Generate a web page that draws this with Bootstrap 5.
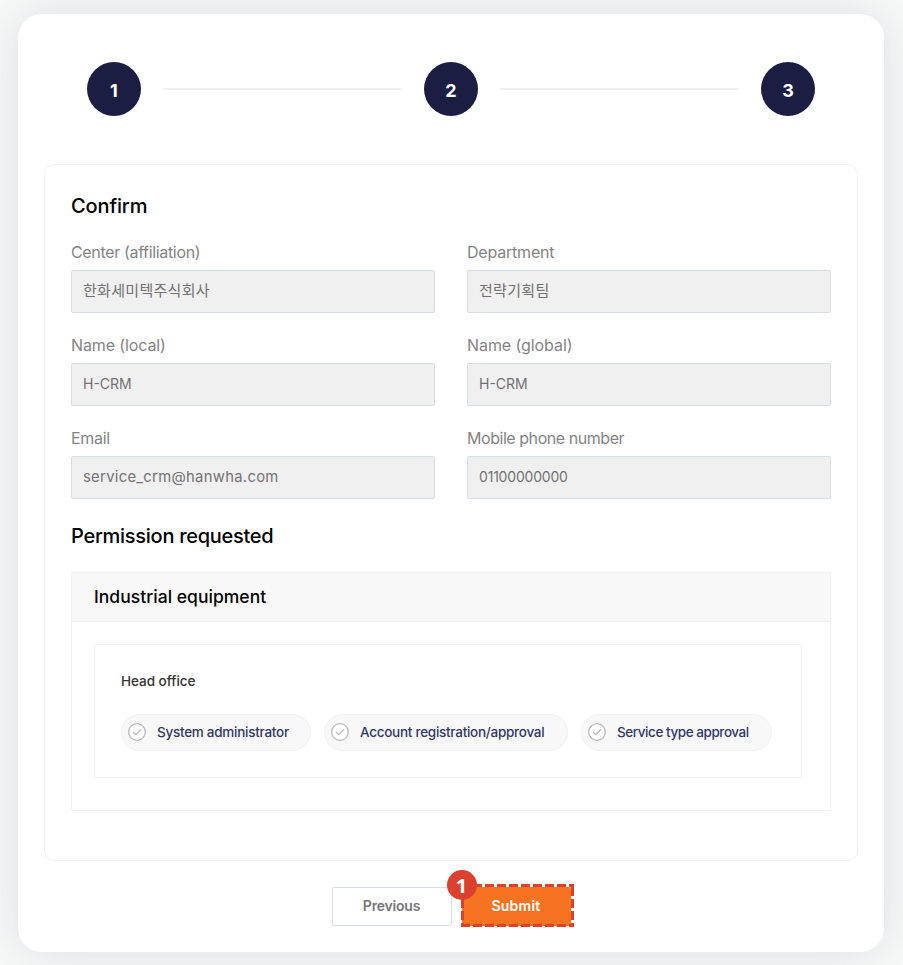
<!DOCTYPE html>
<html lang="en">
<head>
<meta charset="utf-8">
<meta name="viewport" content="width=device-width, initial-scale=1">
<title>Confirm</title>
<link href="https://cdn.jsdelivr.net/npm/bootstrap@5.3.0/dist/css/bootstrap.min.css" rel="stylesheet">
<style>
body{font-family:Inter,"Noto Sans CJK KR",sans-serif;background:#f8f9f8;color:#000;height:965px;overflow:hidden}
.sheet{margin:14px 19px 0 18px;height:938px;border-radius:24px;padding:48px 26px 0;background:#fff;box-shadow:0 0 54px rgba(60,72,115,.15)}
.stepper{padding:0 43px;margin-bottom:48px}
.step-dot{width:54px;height:54px;flex:none;background:#1b1d43;color:#fff;font-size:18px;font-weight:700;padding-top:2px}
.step-line{height:2px;background:#f1f1f2;margin:0 22px}
.panel{height:697px;border:1px solid #f1f1f2;border-radius:10px;padding:26px 26px 0}
.heading{font-size:20px;font-weight:500;line-height:30px;margin:0;white-space:nowrap}
.fields{--bs-gutter-x:32px;margin-top:19px}
.fields>div{height:93.2px}
.form-label{font-size:16px;line-height:24px;color:#848484;margin:0 0 6px;display:block}
.form-control[readonly]{height:43px;padding:0 11px 2px;font-size:14px;line-height:39px;color:#727272;background:#f0f0f0;border:1px solid #d9dee4;border-radius:2px}
.heading.k-perm{padding-top:1px}
.group-box{margin-top:21px;height:239px;border:1px solid #f1f1f2}
.group-title{height:49px;padding:0 22px;font-size:17.5px;font-weight:500;background:#f8f8f8;border-bottom:1px solid #f1f1f2;line-height:47px}
.office{margin:22px 28px 0 22px;height:134px;border:1px solid #f1f1f2;border-radius:2px;padding:25px 26px 0}
.office-name{font-size:13.5px;font-weight:500;line-height:22px;color:#333;margin-bottom:22px;letter-spacing:-.02px}
.pills{gap:13px}
.pill{height:37px;border:1px solid #f1f1f2;background:#f8f8f8;color:#323968;font-size:13.5px;font-weight:500;gap:11px;padding-left:6px;white-space:nowrap}
.pill svg{flex:none}
.actions{margin-top:26px;gap:10px}
.actions .btn{height:39px;padding:0 0 2px;font-size:14px;font-weight:600;border-radius:2px}
.btn-prev{width:120px;background:#fff;border:1px solid #d9dee4;color:#777}
.actions .btn-send{width:109px;background:#f57321;border:0;color:#fff}
.frame{left:-1px;top:-3px;width:113px;height:43px}
.callout-no{left:-15px;top:-17px;width:30px;height:30px;background:#dc402f;color:#fff;font:700 20px/31px "Noto Sans",sans-serif}
.k-confirm{letter-spacing:-.12px}.k-perm{letter-spacing:-.28px}
.k-center{letter-spacing:-.34px}.k-dept{letter-spacing:-.2px}.k-local{letter-spacing:-.12px}.k-global{letter-spacing:-.08px}.k-email{letter-spacing:-.31px}.k-phone{letter-spacing:-.45px}
.form-control.k-ko{letter-spacing:.3px;font-size:15px;line-height:37px;padding-bottom:4px}
.form-control.k-mail{letter-spacing:.3px;font-size:14.8px}.k-num{letter-spacing:-.2px}
.k-ind{letter-spacing:.03px}.k-sys{letter-spacing:-.267px;width:190px}.k-acc{letter-spacing:-.271px;width:244px}.k-svc{letter-spacing:-.441px;width:191px}
.k-prev{letter-spacing:-.2px}.k-sub{letter-spacing:.247px}
</style>
</head>
<body>
<svg class="d-none"><symbol id="tick" viewBox="0 0 18 18"><circle cx="9" cy="9" r="8.3" fill="#fff" stroke="#b8b8b8" stroke-width="1.3"/><path d="M5 8.9l2.8 2.8L13 6.4" fill="none" stroke="#b8b8b8" stroke-width="1.3"/></symbol></svg>
<main class="sheet">
  <div class="stepper d-flex align-items-center">
    <div class="step-dot rounded-circle d-flex align-items-center justify-content-center">1</div>
    <div class="step-line flex-grow-1"></div>
    <div class="step-dot rounded-circle d-flex align-items-center justify-content-center">2</div>
    <div class="step-line flex-grow-1"></div>
    <div class="step-dot rounded-circle d-flex align-items-center justify-content-center">3</div>
  </div>
  <section class="panel">
    <h1 class="heading k-confirm">Confirm</h1>
    <div class="row fields">
      <div class="col-6"><label class="form-label k-center" for="f1">Center (affiliation)</label><input id="f1" class="form-control k-ko" readonly value="한화세미텍주식회사"></div>
      <div class="col-6"><label class="form-label k-dept" for="f2">Department</label><input id="f2" class="form-control k-ko" readonly value="전략기획팀"></div>
      <div class="col-6"><label class="form-label k-local" for="f3">Name (local)</label><input id="f3" class="form-control" readonly value="H-CRM"></div>
      <div class="col-6"><label class="form-label k-global" for="f4">Name (global)</label><input id="f4" class="form-control" readonly value="H-CRM"></div>
      <div class="col-6"><label class="form-label k-email" for="f5">Email</label><input id="f5" class="form-control k-mail" readonly value="service_crm@hanwha.com"></div>
      <div class="col-6"><label class="form-label k-phone" for="f6">Mobile phone number</label><input id="f6" class="form-control k-num" readonly value="01100000000"></div>
    </div>
    <h2 class="heading k-perm">Permission requested</h2>
    <div class="group-box">
      <div class="group-title k-ind">Industrial equipment</div>
      <div class="office">
        <div class="office-name">Head office</div>
        <div class="pills d-flex">
          <div class="pill rounded-pill d-flex align-items-center k-sys"><svg width="18" height="18"><use href="#tick"/></svg>System administrator</div>
          <div class="pill rounded-pill d-flex align-items-center k-acc"><svg width="18" height="18"><use href="#tick"/></svg>Account registration/approval</div>
          <div class="pill rounded-pill d-flex align-items-center k-svc"><svg width="18" height="18"><use href="#tick"/></svg>Service type approval</div>
        </div>
      </div>
    </div>
  </section>
  <div class="actions d-flex justify-content-center">
    <button class="btn btn-prev k-prev" type="button">Previous</button>
    <div class="position-relative">
      <button class="btn btn-send k-sub" type="button">Submit</button>
      <svg class="frame position-absolute" viewBox="0 0 113 43"><path d="M0 1.5H113M111.5 3V43M0 41.5H113M1.5 3V43" fill="none" stroke="#dc402f" stroke-width="3" stroke-dasharray="9 3"/></svg>
      <span class="callout-no position-absolute rounded-circle text-center">1</span>
    </div>
  </div>
</main>
<script src="https://cdn.jsdelivr.net/npm/bootstrap@5.3.0/dist/js/bootstrap.bundle.min.js"></script>
</body>
</html>
